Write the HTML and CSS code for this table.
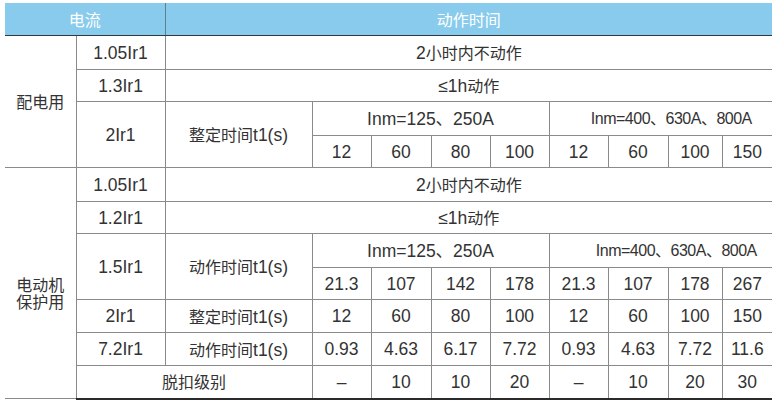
FILE: index.html
```html
<!DOCTYPE html>
<html lang="zh">
<head>
<meta charset="utf-8">
<title>动作时间</title>
<link rel="stylesheet" href="styles.css">
</head>
<body>
<table class="spec">
  <colgroup>
    <col class="c-a"><col class="c-b"><col class="c-c">
    <col class="c-d"><col class="c-e"><col class="c-d"><col class="c-d">
    <col class="c-d"><col class="c-e"><col class="c-f"><col class="c-g">
  </colgroup>
  <thead>
    <tr class="head">
      <th colspan="2">电流</th>
      <th colspan="9" class="head-right">动作时间</th>
    </tr>
  </thead>
  <tbody>
    <tr class="r34">
      <td rowspan="4" class="group"><span class="zh">配电用</span></td>
      <td>1.05Ir1</td>
      <td colspan="9">2<span class="zh">小时内不动作</span></td>
    </tr>
    <tr class="r32">
      <td>1.3Ir1</td>
      <td colspan="9">≤1h<span class="zh">动作</span></td>
    </tr>
    <tr class="r34">
      <td rowspan="2">2Ir1</td>
      <td rowspan="2"><span class="zh">整定时间</span>t1(s)</td>
      <td colspan="4">Inm=125、250A</td>
      <td colspan="4" class="inm2 shift1">Inm=400、630A、800A</td>
    </tr>
    <tr class="r32 group-end">
      <td>12</td><td>60</td><td>80</td><td>100</td>
      <td>12</td><td>60</td><td>100</td><td>150</td>
    </tr>
    <tr class="r34">
      <td rowspan="7" class="group group2"><span class="zh zh-line">电动机</span><span class="zh zh-line">保护用</span></td>
      <td>1.05Ir1</td>
      <td colspan="9">2<span class="zh">小时内不动作</span></td>
    </tr>
    <tr class="r32">
      <td>1.2Ir1</td>
      <td colspan="9">≤1h<span class="zh">动作</span></td>
    </tr>
    <tr class="r34">
      <td rowspan="2">1.5Ir1</td>
      <td rowspan="2"><span class="zh">动作时间</span>t1(s)</td>
      <td colspan="4">Inm=125、250A</td>
      <td colspan="4" class="inm2 shift2">Inm=400、630A、800A</td>
    </tr>
    <tr class="r32">
      <td>21.3</td><td>107</td><td>142</td><td>178</td>
      <td>21.3</td><td>107</td><td>178</td><td>267</td>
    </tr>
    <tr class="r33">
      <td>2Ir1</td>
      <td><span class="zh">整定时间</span>t1(s)</td>
      <td>12</td><td>60</td><td>80</td><td>100</td>
      <td>12</td><td>60</td><td>100</td><td>150</td>
    </tr>
    <tr class="r33">
      <td>7.2Ir1</td>
      <td><span class="zh">动作时间</span>t1(s)</td>
      <td>0.93</td><td>4.63</td><td>6.17</td><td>7.72</td>
      <td>0.93</td><td>4.63</td><td>7.72</td><td>11.6</td>
    </tr>
    <tr class="r33 last">
      <td colspan="2"><span class="zh">脱扣级别</span></td>
      <td>–</td><td>10</td><td>10</td><td>20</td>
      <td>–</td><td>10</td><td>20</td><td>30</td>
    </tr>
  </tbody>
</table>
</body>
</html>
```

FILE: styles.css
```css
html, body {
  margin: 0;
  padding: 0;
  background: #ffffff;
}

.spec {
  margin: 3px 0 0 5px;
  width: 767px;
  table-layout: fixed;
  border-collapse: collapse;
  font-family: "Liberation Sans", "Noto Sans CJK SC", sans-serif;
  font-size: 17.5px;
  color: #333333;
}

.c-a { width: 71px; }
.c-b { width: 89px; }
.c-c { width: 147px; }
.c-d { width: 59px; }
.c-e { width: 60px; }
.c-f { width: 54px; }
.c-g { width: 50px; }

.spec th,
.spec td {
  padding: 0;
  text-align: center;
  vertical-align: middle;
  white-space: nowrap;
  line-height: 20px;
}

.spec td {
  border: 1px solid #8a8a8a;
}

.spec tbody tr > td.group {
  border-left: none;
}

.spec tbody tr > td:last-child {
  border-right: none;
}

.spec .head th {
  background: #88cbec;
  color: #ffffff;
  font-family: "Noto Sans CJK SC", sans-serif;
  font-size: 16px;
  font-weight: 400;
  height: 32px;
  border-bottom: 1px solid #2f3a40;
}

.spec .head th + th {
  border-left: 1px solid #5f7f90;
}

.zh {
  font-family: "Noto Sans CJK SC", sans-serif;
  font-size: 16px;
}

.spec td.group2 {
  padding-top: 20px;
}

.zh-line {
  display: block;
  height: 17px;
  line-height: 17px;
}

.r34 { height: 34px; }
.r32 { height: 32px; }
.r33 { height: 33px; }

.spec td.inm2 {
  font-size: 16px;
  letter-spacing: -0.5px;
}

.spec td.shift1 { padding-left: 21px; }
.spec td.shift2 { padding-left: 31px; }

.last td {
  border-bottom: 2px solid #2a2a2a;
}

.spec .last td:first-child {
  border-left: 1px solid #8a8a8a;
}
```
